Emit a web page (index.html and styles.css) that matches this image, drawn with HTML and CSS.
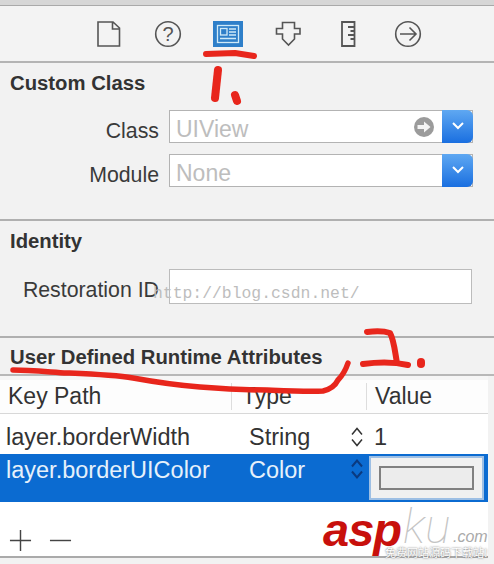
FILE: index.html
```html
<!DOCTYPE html>
<html lang="en">
<head>
<meta charset="utf-8">
<title>Identity Inspector</title>
<link rel="stylesheet" href="styles.css">
</head>
<body>
<div class="page">
  <div class="topstrip"></div>
  <nav class="toolbar">
    <svg class="tool" viewBox="0 0 30 30"><path d="M5 3H20L26.500 9V27H5Z M19.500 3V10H26.500" fill="none" stroke="#555" stroke-width="1.600"/></svg>
    <svg class="tool" viewBox="0 0 30 30"><circle cx="15" cy="15" r="12.300" fill="none" stroke="#555" stroke-width="1.600"/><text x="15" y="21.500" text-anchor="middle" class="qmark">?</text></svg>
    <svg class="tool active" viewBox="0 0 30 30"><rect width="30" height="26" y="2" fill="#2e7fc9"/><rect x="4.500" y="6.500" width="21" height="17" fill="none" stroke="#cfeaf8" stroke-width="1.300"/><rect x="7.500" y="9.500" width="6.500" height="6.500" fill="none" stroke="#cfeaf8" stroke-width="1.300"/><path d="M16 10H23M16 13H23M16 16H23M7 19.500H23" stroke="#cfeaf8" stroke-width="1.300"/></svg>
    <svg class="tool" viewBox="0 0 30 30"><path d="M9.500 3.500H21.500V9.500H27V15H21.500V20L15.500 26L9.500 20V15H3.500V9.500H9.500Z" fill="none" stroke="#555" stroke-width="1.600"/></svg>
    <svg class="tool" viewBox="0 0 30 30"><path d="M9 3H21.500V27H9Z M15 8H21.500M17.500 12H21.500M15 16H21.500M17.500 20H21.500" fill="none" stroke="#555" stroke-width="1.800"/></svg>
    <svg class="tool" viewBox="0 0 30 30"><circle cx="15" cy="15" r="12.300" fill="none" stroke="#555" stroke-width="1.600"/><path d="M7 15H23M16.500 8.500L23 15L16.500 21.500" fill="none" stroke="#555" stroke-width="1.600"/></svg>
  </nav>

  <section class="panel custom">
    <h2 class="heading">Custom Class</h2>
    <div class="row">
      <label class="label">Class</label>
      <div class="field combo">
        <span class="value">UIView</span>
        <svg class="go" viewBox="0 0 20 20"><circle cx="10" cy="10" r="10" fill="#9b9b9b"/><path d="M3.500 8H10V4.500L16.500 10L10 15.500V12H3.500Z" fill="#f4f4f4"/></svg>
        <span class="drop"><svg viewBox="0 0 14 10" class="chev"><path d="M2 2L7 7L12 2" fill="none" stroke="#fff" stroke-width="2"/></svg></span>
      </div>
    </div>
    <div class="row">
      <label class="label">Module</label>
      <div class="field combo">
        <span class="value">None</span>
        <span class="drop"><svg viewBox="0 0 14 10" class="chev"><path d="M2 2L7 7L12 2" fill="none" stroke="#fff" stroke-width="2"/></svg></span>
      </div>
    </div>
  </section>

  <section class="panel identity">
    <h2 class="heading">Identity</h2>
    <div class="row">
      <label class="label">Restoration ID</label>
      <div class="field plain"></div>
    </div>
  </section>

  <section class="attrs">
    <h2 class="heading attrs-title">User Defined Runtime Attributes</h2>
    <div class="table">
      <div class="thead">
        <span class="th key">Key Path</span>
        <span class="th type">Type</span>
        <span class="th val">Value</span>
      </div>
      <div class="tr">
        <span class="td key">layer.borderWidth</span>
        <span class="td type">String</span>
        <svg class="stepper" viewBox="0 0 14 22"><path d="M2 8.500L7 2.500L12 8.500M2 13.500L7 19.500L12 13.500" fill="none" stroke="#333" stroke-width="1.500"/></svg>
        <span class="td num">1</span>
      </div>
      <div class="tr selected">
        <span class="td key">layer.borderUIColor</span>
        <span class="td type">Color</span>
        <svg class="stepper" viewBox="0 0 14 22"><path d="M2 8.500L7 2.500L12 8.500M2 13.500L7 19.500L12 13.500" fill="none" stroke="#0a3a80" stroke-width="2"/></svg>
        <div class="swatch"><div class="swatch-inner"></div></div>
      </div>
      <div class="tfoot">
        <svg class="addrem" viewBox="0 0 24 24"><path d="M1 12H23M12 1V23" stroke="#444" stroke-width="1.500"/></svg>
        <svg class="addrem" viewBox="0 0 24 24"><path d="M1 12H23" stroke="#444" stroke-width="1.500"/></svg>
      </div>
    </div>
  </section>

  <svg class="ink" viewBox="0 0 494 564">
    <g fill="none" stroke="#e8261c" stroke-linecap="round" stroke-linejoin="round">
      <path d="M206 54L235 53L254 56" stroke-width="6"/>
      <path d="M218 70L215 98" stroke-width="8"/>
      <path d="M235 95L237 101" stroke-width="8"/>
      <path d="M13 370C30 370 50 372 67 373C90 374 115 375 133 378C155 382 175 385 200 387C225 389 245 390 267 390C290 391 310 392 323 391C332 389 336 384 338 380C343 375 346 369 348 363" stroke-width="5.500"/>
      <path d="M367 332C376 331 384 331 390 333C394 340 395 352 397 363M363 364C378 362 395 362 408 365" stroke-width="6"/>
      <path d="M421 362L421 364" stroke-width="8"/>
    </g>
  </svg>
  <span class="csdn">http://blog.csdn.net/</span>
  <div class="brand">
    <span class="asp">asp</span><span class="ku">ku</span><span class="com">.com</span>
    <span class="slogan">免费网站源码下载站!</span>
  </div>
</div>
</body>
</html>
```
FILE: styles.css
```css
* { box-sizing: border-box; }
html, body { margin: 0; padding: 0; }
body { width: 494px; height: 564px; overflow: hidden; background: #f2f2f2; font-family: "Liberation Sans", Arial, sans-serif; color: #333; }
.page { position: relative; width: 494px; height: 564px; overflow: hidden; }
.topstrip { height: 6px; background: #d6d6d6; border-bottom: 1px solid #a9a9a9; }
.toolbar { height: 57px; display: flex; align-items: center; padding: 0 0 0 93px; gap: 30px; border-bottom: 2px solid #b4b4b4; background: #f3f3f3; }
.tool { width: 30px; height: 30px; flex: none; }
.qmark { font: 20px "Liberation Sans", sans-serif; fill: #555; }
.panel { padding: 0 21px 0 10px; }
.custom { height: 158px; border-bottom: 2px solid #b0b0b0; }
.identity { height: 117px; border-bottom: 2px solid #b0b0b0; padding-right: 22px; }
.heading { margin: 0; font-size: 20.300px; font-weight: 700; color: #333; line-height: 22px; }
.custom .heading { padding-top: 9px; height: 47px; }
.identity .heading { padding-top: 9px; height: 48px; }
.row { display: flex; align-items: center; height: 33px; margin-bottom: 11px; }
.identity .row { height: 35px; }
.label { width: 159px; padding: 10px 10px 0 0; text-align: right; font-size: 21.300px; color: #3a3a3a; white-space: nowrap; flex: none; }
.identity .label { padding-top: 7px; }
.field { flex: 1; height: 100%; background: #fff; border: 1px solid #b3b3b3; display: flex; align-items: center; position: relative; }
.plain { border-color: #bcbcbc; }
.value { font-size: 23px; color: #bdbdbd; padding: 6px 0 0 6px; flex: 1; }
.go { width: 20px; height: 20px; margin-right: 8px; }
.drop { width: 31px; height: 33px; margin: -1px -1px -1px 0; background: linear-gradient(#5fa8f2, #1a6fe0); border-radius: 0 6px 6px 0; display: flex; justify-content: center; padding-top: 11px; }
.chev { width: 14px; height: 10px; }
.attrs { background: #f2f2f2; }
.attrs-title { height: 38px; padding: 8px 0 0 10px; line-height: 22px; border-bottom: 2px solid #b8b8b8; }
.table { width: 488px; height: 182px; background: #fff; display: flex; flex-direction: column; border-bottom: 2px solid #aaa; }
.thead { height: 38px; display: flex; align-items: center; border-bottom: 1px solid #d8d8d8; font-size: 23px; padding-top: 4px; background: linear-gradient(#f6f6f6 0, #f6f6f6 4px, #fdfdfd 4px); color: #333; }
.th, .td { white-space: nowrap; }
.th.key { width: 231px; padding-left: 8px; }
.th.type { width: 135px; padding-left: 10px; border-left: 1px solid #ddd; }
.th.val { padding-left: 8px; border-left: 1px solid #ddd; }
.tr { display: flex; align-items: center; font-size: 23.500px; color: #333; }
.tr:not(.selected) { height: 40px; padding-top: 6px; }
.td.key { width: 249px; padding-left: 6px; }
.td.type { width: 100px; }
.stepper { width: 14px; height: 22px; margin-left: 1px; flex: none; }
.num { padding-left: 10px; }
.selected { height: 48px; background: #0b6bd1; color: #e6f1fb; align-items: flex-start; padding-top: 3px; }
.selected .stepper { margin-top: 1px; }
.swatch { width: 115px; height: 44px; margin: -1px 0 0 5px; background: #f0f0f0; border: 2px solid #9dbfe4; display: flex; align-items: center; justify-content: center; }
.swatch-inner { width: 95px; height: 24px; background: #ececec; border: 2px solid #808080; }
.tfoot { flex: 1; display: flex; align-items: center; gap: 17px; padding: 22px 0 0 9px; }
.addrem { width: 23px; height: 23px; }
.ink { position: absolute; left: 0; top: 0; width: 494px; height: 564px; pointer-events: none; }
.csdn { position: absolute; left: 153px; top: 284px; font: 16.400px "Liberation Mono", monospace; color: #bdbdbd; white-space: nowrap; }
.brand { position: absolute; left: 322px; top: 505px; width: 172px; height: 59px; }
.asp { position: absolute; left: 1px; top: 0; font: italic 700 47px/50px "Liberation Sans", sans-serif; color: #c8100c; letter-spacing: -1px; }
.ku { position: absolute; left: 81px; top: -3px; font: italic 100 48px/50px Roboto, sans-serif; color: #c4c4c4; }
.com { position: absolute; left: 131px; top: 22px; font: italic 400 16px/20px "Liberation Sans", sans-serif; color: #aaa; }
.slogan { position: absolute; left: 63px; top: 41px; font: 11px/13px "Noto Sans CJK SC", sans-serif; color: #fff; text-shadow: 0 0 2px #555; white-space: nowrap; }
```
